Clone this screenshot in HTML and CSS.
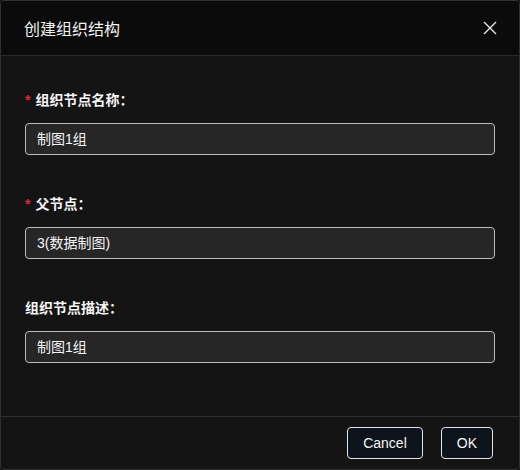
FILE: index.html
```html
<!DOCTYPE html>
<html lang="zh">
<head>
<meta charset="utf-8">
<link rel="stylesheet" href="styles.css">
</head>
<body>
<div class="dialog">
  <div class="header">
    <div class="title">创建组织结构</div>
    <button class="close" aria-label="close">
      <svg width="14" height="14" viewBox="0 0 14 14"><path d="M1 1L13 13M13 1L1 13" stroke="#e8e8e8" stroke-width="1.4" fill="none"/></svg>
    </button>
  </div>
  <div class="body">
    <div class="item">
      <label class="label"><span class="req">*</span>组织节点名称：</label>
      <div class="input">制图1组</div>
    </div>
    <div class="item">
      <label class="label"><span class="req">*</span>父节点：</label>
      <div class="input">3(数据制图)</div>
    </div>
    <div class="item">
      <label class="label">组织节点描述：</label>
      <div class="input">制图1组</div>
    </div>
  </div>
  <div class="footer">
    <button class="btn">Cancel</button>
    <button class="btn">OK</button>
  </div>
</div>
</body>
</html>
```
FILE: styles.css
```css
* { box-sizing: border-box; }
html, body { margin: 0; padding: 0; background: #141414; }
body {
  font-family: "Liberation Sans", "Noto Sans CJK SC", sans-serif;
  color: #f0f0f0;
  font-size: 14px;
}
.dialog {
  width: 520px;
  height: 470px;
  border: 1px solid #303030;
  border-radius: 4px;
  background: #141414;
  display: flex;
  flex-direction: column;
  overflow: hidden;
}
.header {
  height: 55px;
  background: #0b0b0b;
  border-bottom: 1px solid #2a2a2a;
  display: flex;
  align-items: center;
  justify-content: space-between;
  padding: 0 22px 0 23px;
  flex-shrink: 0;
}
.title {
  font-size: 16px;
  color: #f2f2f2;
}
.close {
  background: none;
  border: 0;
  padding: 0;
  width: 14px;
  height: 14px;
  display: flex;
}
.body {
  flex: 1;
  padding: 33px 24px 0;
}
.item { margin-bottom: 38px; }
.label {
  display: block;
  height: 22px;
  line-height: 22px;
  font-weight: bold;
  margin-bottom: 12px;
  color: #f5f5f5;
}
.req {
  color: #e0282e;
  margin-right: 5px;
  font-family: "Liberation Sans", sans-serif;
}
.input {
  height: 32px;
  line-height: 30px;
  border: 1px solid #bdbdbd;
  border-radius: 4px;
  background: #262626;
  padding: 0 11px;
  color: #f5f5f5;
}
.footer {
  height: 53px;
  border-top: 1px solid #2e2e2e;
  display: flex;
  justify-content: flex-end;
  align-items: center;
  gap: 18px;
  padding: 0 26px 0 0;
  flex-shrink: 0;
}
.btn {
  height: 32px;
  padding: 0 15px;
  background: #0e141b;
  border: 1px solid #e6e6e6;
  border-radius: 4px;
  color: #f5f5f5;
  font-family: "Liberation Sans", "Noto Sans CJK SC", sans-serif;
  font-size: 14px;
}
```
